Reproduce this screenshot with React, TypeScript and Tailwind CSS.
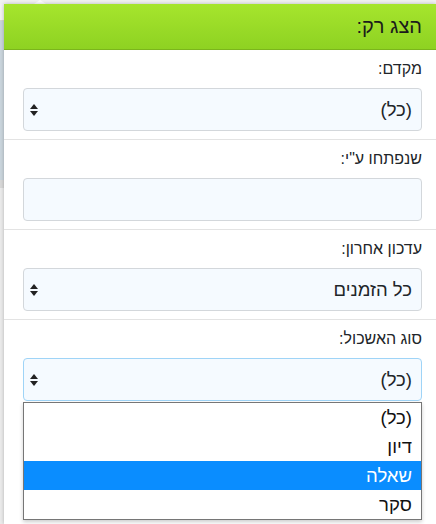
import React from 'react'

const font = { fontFamily: '"Liberation Sans", "DejaVu Sans", sans-serif' }

function Arrows() {
  return (
    <svg width="8" height="12" viewBox="0 0 8 12" className="shrink-0">
      <path d="M4 0 L8 5 L0 5 Z" fill="#222" />
      <path d="M0 7 L8 7 L4 12 Z" fill="#222" />
    </svg>
  )
}

function SelectBox({ value, focused = false }: { value: string; focused?: boolean }) {
  return (
    <div
      className={`flex h-[43px] items-center justify-between rounded-[4px] border bg-[#f5faff] pr-[9px] pl-[6px] ${
        focused ? 'border-[#9fd4f7]' : 'border-[#d3d7db]'
      }`}
    >
      <span className="text-[18.5px] text-[#212529]">{value}</span>
      <Arrows />
    </div>
  )
}

function Section({ label, children, last = false }: { label: string; children: React.ReactNode; last?: boolean }) {
  return (
    <div className={`relative pt-[8px] pb-[8px] pr-[14px] pl-[19px] ${last ? '' : 'border-b border-[#e3e3e3]'}`}>
      <div className="mb-[8px] h-[22px] text-[16px] leading-[22px] text-[#212529]">{label}</div>
      {children}
    </div>
  )
}

const options = ['(כל)', 'דיון', 'שאלה', 'סקר']

export default function App() {
  return (
    <div className="flex h-[524px] w-[436px] flex-col overflow-hidden bg-[#f2f2f2]" style={font}>
      {/* page behind the popover */}
      <div className="flex h-[4px] shrink-0">
        <div className="w-[34px] bg-[#f2f2f2]" />
        <svg width="12" height="4" viewBox="0 0 12 4">
          <path d="M0 4 L6 0 L12 4 Z" fill="#fff" />
        </svg>
      </div>
      <div className="flex min-h-0 flex-1">
        <div className="flex w-[4px] shrink-0 flex-col">
          <div className="h-[16px] bg-[#f4f4f4]" />
          <div className="h-[1px] bg-[#d6d6d6]" />
          <div className="h-[159px] bg-[#cbd6de]" />
          <div className="h-[8px] bg-[#d9d9d9]" />
          <div className="flex-1 bg-[#ececec]" />
        </div>

        {/* popover panel */}
        <div dir="rtl" className="flex flex-1 flex-col bg-white shadow-[0_0_4px_rgba(0,0,0,0.25)]">
          <div className="flex h-[46px] shrink-0 items-center border-b border-[#7bb51c] bg-gradient-to-b from-[#a6e52d] to-[#8ed222] pr-[14px] pb-[1px]">
            <span className="text-[20px] text-[#1b1b1b]">הצג רק:</span>
          </div>

          <Section label="מקדם:">
            <SelectBox value="(כל)" />
          </Section>

          <Section label={'שנפתחו ע"י:'}>
            <div className="h-[43px] rounded-[4px] border border-[#d3d7db] bg-[#f5faff]" />
          </Section>

          <Section label="עדכון אחרון:">
            <SelectBox value="כל הזמנים" />
          </Section>

          <Section label="סוג האשכול:" last>
            <SelectBox value="(כל)" focused />
            {/* open dropdown list */}
            <div className="absolute top-[82px] right-[14px] left-[19px] z-10 border border-[#767676] bg-white shadow-[0_2px_4px_rgba(0,0,0,0.2)]">
              {options.map((o, i) => (
                <div
                  key={o}
                  className={`flex h-[29px] items-center pr-[9px] text-[18.5px] ${
                    i === 2 ? 'bg-[#0a8dff] text-white' : 'text-[#111]'
                  }`}
                >
                  {o}
                </div>
              ))}
            </div>
          </Section>
        </div>
      </div>
    </div>
  )
}
